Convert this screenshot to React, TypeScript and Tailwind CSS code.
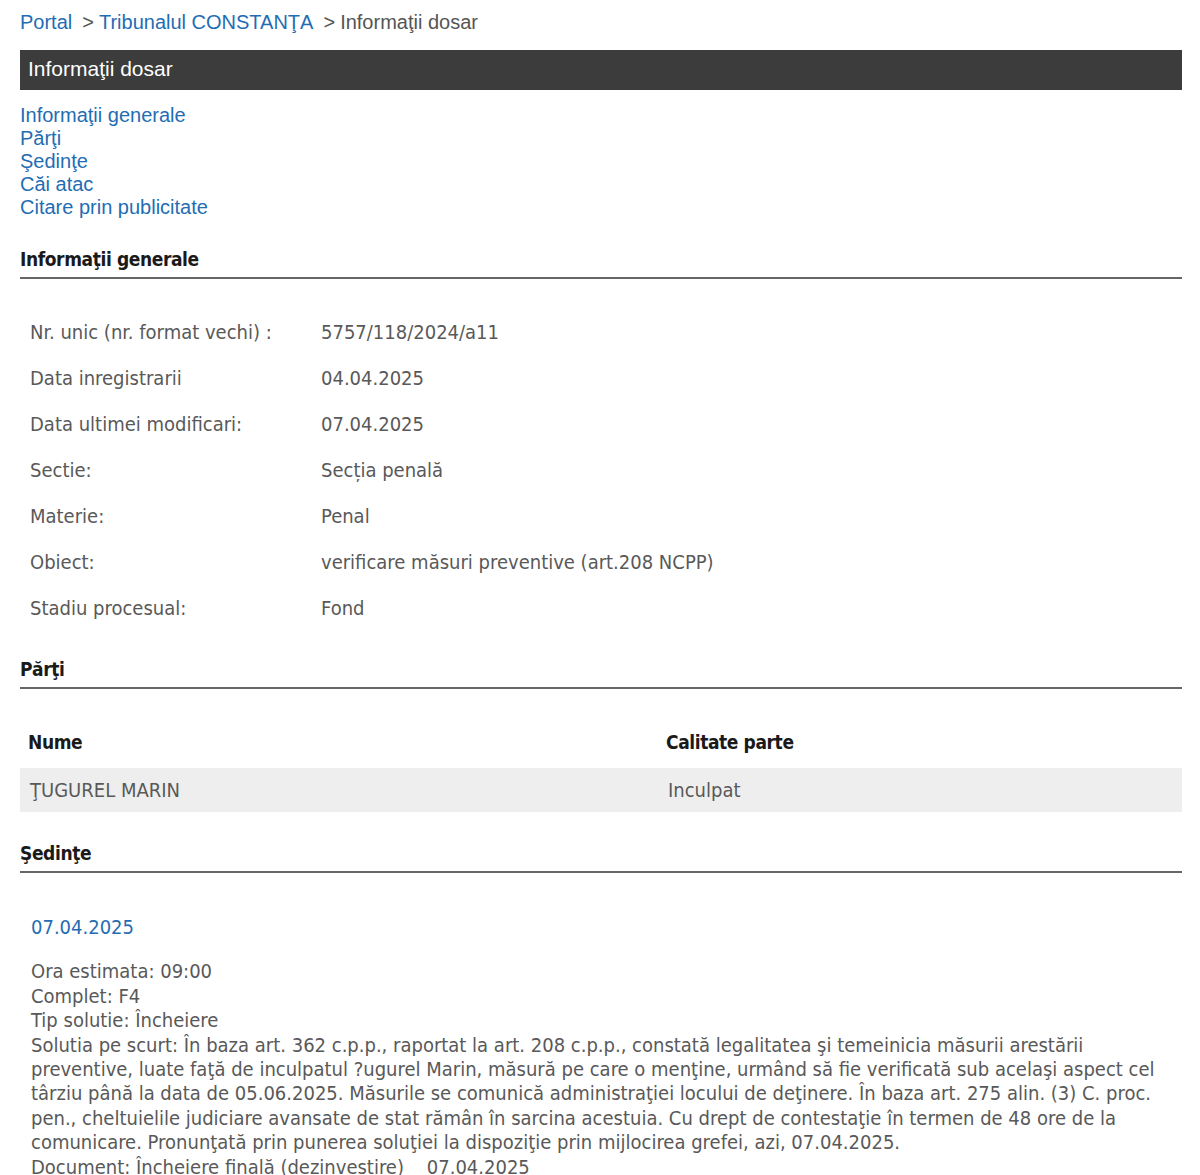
import React from 'react';

const body = "font-['DejaVu_Sans_Condensed','DejaVu_Sans',sans-serif]";
const arial = "font-['Liberation_Sans',Arial,sans-serif]";

const generalInfo = [
  { label: 'Nr. unic (nr. format vechi) :', value: '5757/118/2024/a11' },
  { label: 'Data inregistrarii', value: '04.04.2025' },
  { label: 'Data ultimei modificari:', value: '07.04.2025' },
  { label: 'Sectie:', value: 'Secția penală' },
  { label: 'Materie:', value: 'Penal' },
  { label: 'Obiect:', value: 'verificare măsuri preventive (art.208 NCPP)' },
  { label: 'Stadiu procesual:', value: 'Fond' },
];

const navLinks = ['Informaţii generale', 'Părţi', 'Şedinţe', 'Căi atac', 'Citare prin publicitate'];

const SectionTitle: React.FC<{ title: string; className?: string }> = ({ title, className }) => (
  <div className={`${className ?? ''} border-b-2 border-[#666] pb-[6px]`}>
    <h2 className={`${body} text-[19px] leading-[24px] font-bold text-[#1a1a1a] tracking-[-0.4px]`}>{title}</h2>
  </div>
);

const App: React.FC = () => {
  return (
    <div className="min-h-[1175px] bg-white px-[20px] pr-[18px]">
      {/* Breadcrumb */}
      <div className={`${arial} pt-[11px] text-[20px] leading-[23px] flex items-center`}>
        <a className="text-[#1f6db3]">Portal</a>
        <span className="text-[#555] ml-[10px] mr-[5px]">&gt;</span>
        <a className="text-[#1f6db3]">Tribunalul CONSTANŢA</a>
        <span className="text-[#555] ml-[10px] mr-[5px]">&gt;</span>
        <span className="text-[#555]">Informaţii dosar</span>
      </div>

      {/* Title bar */}
      <div className={`${arial} mt-[16px] h-[40px] bg-[#3c3c3c] pl-[8px] text-[21px] leading-[37px] text-white`}>
        Informaţii dosar
      </div>

      {/* Anchors */}
      <div className={`${arial} mt-[14px] flex flex-col items-start text-[20px] leading-[23px]`}>
        {navLinks.map((l) => (
          <a key={l} className="text-[#1f6db3]">{l}</a>
        ))}
      </div>

      <SectionTitle title="Informaţii generale" className="mt-[28px]" />

      <div className={`${body} mt-[30px] text-[20px] text-[#595959]`}>
        {generalInfo.map((row) => (
          <div key={row.label} className="grid h-[46px] grid-cols-[291px_1fr] items-center pl-[10px]">
            <span>{row.label}</span>
            <span>{row.value}</span>
          </div>
        ))}
      </div>

      <SectionTitle title="Părţi" className="mt-[26px]" />

      <div className={`${body} mt-[27px] text-[20px]`}>
        <div className="grid h-[52px] grid-cols-[638px_1fr] items-center text-[19px] font-bold text-[#1a1a1a] tracking-[-0.4px]">
          <span className="pl-[8px]">Nume</span>
          <span className="pl-[8px]">Calitate parte</span>
        </div>
        <div className="grid h-[44px] grid-cols-[638px_1fr] items-center bg-[#eeeeee] text-[#595959]">
          <span className="pl-[10px]">ŢUGUREL MARIN</span>
          <span className="pl-[10px]">Inculpat</span>
        </div>
      </div>

      <SectionTitle title="Şedinţe" className="mt-[29px]" />

      <div className={`${body} mt-[42px] pl-[11px] pr-[21px] text-[20px] leading-[24.4px]`}>
        <div className="text-[#1f6db3]">07.04.2025</div>
        <div className="mt-[20px] text-[#595959]">
          <div>Ora estimata: 09:00</div>
          <div>Complet: F4</div>
          <div>Tip solutie: Încheiere</div>
          <p>
            Solutia pe scurt: În baza art. 362 c.p.p., raportat la art. 208 c.p.p., constată legalitatea şi temeinicia
            măsurii arestării preventive, luate faţă de inculpatul ?ugurel Marin, măsură pe care o menţine, urmând să fie
            verificată sub acelaşi aspect cel târziu până la data de 05.06.2025. Măsurile se comunică administraţiei
            locului de deţinere. În baza art. 275 alin. (3) C. proc. pen., cheltuielile judiciare avansate de stat rămân
            în sarcina acestuia. Cu drept de contestaţie în termen de 48 ore de la comunicare. Pronunţată prin punerea
            soluţiei la dispoziţie prin mijlocirea grefei, azi, 07.04.2025.
          </p>
          <div>Document: Încheiere finală (dezinvestire)&nbsp;&nbsp;&nbsp;&nbsp;07.04.2025</div>
        </div>
      </div>
    </div>
  );
};

export default App;
